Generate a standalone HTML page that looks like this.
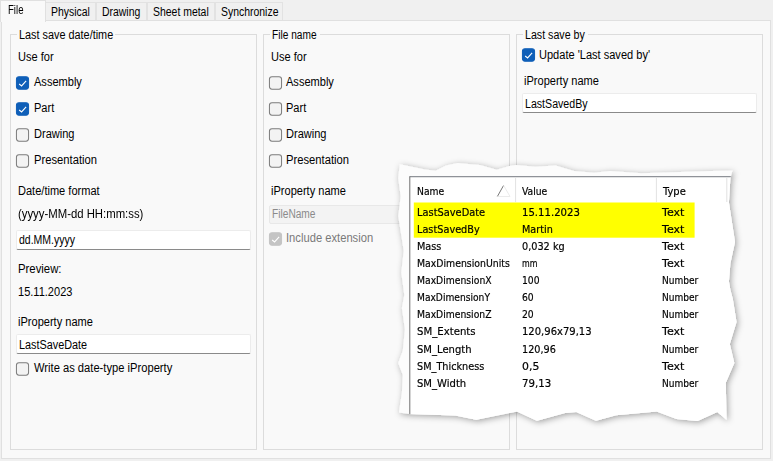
<!DOCTYPE html>
<html><head><meta charset="utf-8">
<style>
html,body{margin:0;padding:0;}
body{width:773px;height:461px;overflow:hidden;background:#f0f0f0;font-family:"Liberation Sans",sans-serif;font-size:12px;color:#000;position:relative;}
.abs{position:absolute;}
.t{position:absolute;white-space:nowrap;line-height:14px;font-size:12px;transform:translateY(var(--dy,0.2px)) scaleX(var(--sx,0.92));transform-origin:0 0;}
.tab{position:absolute;top:2px;height:18px;background:#f0f0f0;border:1px solid #e2e2e2;border-bottom:none;box-sizing:border-box;}
.tab span{position:absolute;top:2px;left:5px;white-space:nowrap;transform:translateY(-0.3px) scaleX(var(--sx,0.87));transform-origin:0 0;}
.panel{position:absolute;left:1px;top:20px;width:770px;height:439px;background:#f9f9f9;border:1px solid #e0e0e0;box-sizing:border-box;}
.grp{position:absolute;top:34px;height:416px;border:1px solid #dcdcdc;box-sizing:border-box;}
.gl{position:absolute;top:28px;white-space:nowrap;line-height:14px;transform:translateY(0.2px) scaleX(var(--sx,0.92));transform-origin:0 0;}
.gb{position:absolute;top:33px;height:3px;background:#f9f9f9;}
.cb{position:absolute;width:13px;height:13px;transform:translateY(0.45px) scale(1.01,1.035);box-sizing:border-box;border:1px solid #7c7c7c;border-radius:3px;background:#f3f3f3;}
.cb.on{background:#0f5fb8;border-color:#0f5fb8;}
.cb.dis{background:#c4c4c4;border-color:#c4c4c4;}
.cb svg{position:absolute;left:-1px;top:-1px;}
.inp{position:absolute;height:19.5px;box-sizing:border-box;background:#fff;border:1px solid #ececec;border-bottom:1px solid #8a8a8a;border-radius:2px;}
.inp.dis{background:#f3f3f3;border:1px solid #e8e8e8;}
.l{position:absolute;white-space:nowrap;font-family:"DejaVu Sans","Liberation Sans",sans-serif;font-size:11px;line-height:13px;-webkit-text-stroke:0.2px #000;transform:translateY(var(--dy,0px)) scaleX(var(--sx,0.837));transform-origin:0 0;}
</style></head><body>
<div class="panel"></div>
<div class="tab" style="left:45px;width:51px;"><span>Physical</span></div>
<div class="tab" style="left:96px;width:51px;"><span>Drawing</span></div>
<div class="tab" style="left:147px;width:68px;"><span>Sheet metal</span></div>
<div class="tab" style="left:215px;width:68px;"><span>Synchronize</span></div>
<div class="abs" style="left:0;top:0;width:46px;height:22px;background:#f9f9f9;border:1px solid #e0e0e0;border-bottom:none;box-sizing:border-box;"></div>
<div class="t" style="left:8.3px;top:3px;--sx:0.80;--dy:0px;">File</div>

<div class="grp" style="left:10px;width:247px;"></div>
<div class="grp" style="left:263px;width:247px;"></div>
<div class="grp" style="left:516px;width:247px;"></div>
<div class="gb" style="left:17px;width:98px;"></div>
<div class="gb" style="left:270px;width:49.5px;"></div>
<div class="gb" style="left:523px;width:64.5px;"></div>
<div class="gl" style="left:19px;--sx:0.905;">Last save date/time</div>
<div class="gl" style="left:272px;--sx:0.845;">File name</div>
<div class="gl" style="left:525px;--sx:0.888;">Last save by</div>

<!-- col 1 -->
<div class="t" style="left:18px;top:50px;">Use for</div>
<div class="cb on" style="left:16px;top:76px;"><svg width="13" height="13" viewBox="0 0 13 13"><path d="M3.2 7.5 L5.6 9.4 L10.1 4.5" fill="none" stroke="#fff" stroke-width="1.1"/></svg></div>
<div class="t" style="left:33.7px;top:75px;">Assembly</div>
<div class="cb on" style="left:16px;top:102px;"><svg width="13" height="13" viewBox="0 0 13 13"><path d="M3.2 7.5 L5.6 9.4 L10.1 4.5" fill="none" stroke="#fff" stroke-width="1.1"/></svg></div>
<div class="t" style="left:33.7px;top:101px;">Part</div>
<div class="cb" style="left:16px;top:128px;"></div>
<div class="t" style="left:33.7px;top:127px;">Drawing</div>
<div class="cb" style="left:16px;top:154px;"></div>
<div class="t" style="left:33.7px;top:153px;--sx:0.935;">Presentation</div>
<div class="t" style="left:18px;top:183px;--dy:0.7px;">Date/time format</div>
<div class="t" style="left:18px;top:207px;--sx:0.945;--dy:0px;">(yyyy-MM-dd HH:mm:ss)</div>
<div class="inp" style="left:16px;top:230px;width:235px;height:20px;"></div>
<div class="t" style="left:19px;top:233px;--sx:0.875;--dy:0.4px;">dd.MM.yyyy</div>
<div class="t" style="left:18px;top:262px;--sx:0.946;--dy:0.4px;">Preview:</div>
<div class="t" style="left:18px;top:285px;--sx:0.92;--dy:0.4px;">15.11.2023</div>
<div class="t" style="left:18px;top:314px;--dy:0.6px;">iProperty name</div>
<div class="inp" style="left:16px;top:334px;width:235px;height:20px;"></div>
<div class="t" style="left:19px;top:337px;--sx:0.904;--dy:0.6px;">LastSaveDate</div>
<div class="cb" style="left:16px;top:362px;"></div>
<div class="t" style="left:33.7px;top:361px;--sx:0.931;">Write as date-type iProperty</div>

<!-- col 2 -->
<div class="t" style="left:271px;top:50px;">Use for</div>
<div class="cb" style="left:269px;top:76px;"></div>
<div class="t" style="left:286.3px;top:75px;">Assembly</div>
<div class="cb" style="left:269px;top:102px;"></div>
<div class="t" style="left:286.3px;top:101px;">Part</div>
<div class="cb" style="left:269px;top:128px;"></div>
<div class="t" style="left:286.3px;top:127px;">Drawing</div>
<div class="cb" style="left:269px;top:154px;"></div>
<div class="t" style="left:286.3px;top:153px;--sx:0.935;">Presentation</div>
<div class="t" style="left:271px;top:184px;--dy:-0.2px;">iProperty name</div>
<div class="inp dis" style="left:269px;top:204.5px;width:235px;height:19px;"></div>
<div class="t" style="left:272px;top:207px;color:#8a8a8a;--sx:0.847;">FileName</div>
<div class="cb dis" style="left:269px;top:232px;"><svg width="13" height="13" viewBox="0 0 13 13"><path d="M3.2 7.5 L5.6 9.4 L10.1 4.5" fill="none" stroke="#fff" stroke-width="1.1"/></svg></div>
<div class="t" style="left:286.3px;top:231px;color:#7a7a7a;--sx:0.933;">Include extension</div>

<!-- col 3 -->
<div class="cb on" style="left:522px;top:48px;"><svg width="13" height="13" viewBox="0 0 13 13"><path d="M3.2 7.5 L5.6 9.4 L10.1 4.5" fill="none" stroke="#fff" stroke-width="1.1"/></svg></div>
<div class="t" style="left:539px;top:48px;">Update 'Last saved by'</div>
<div class="t" style="left:524px;top:73px;--dy:0.8px;">iProperty name</div>
<div class="inp" style="left:522px;top:93px;width:235px;height:20px;"></div>
<div class="t" style="left:525px;top:97px;--sx:0.885;">LastSavedBy</div>

<!-- overlay -->
<svg class="abs" style="left:380px;top:150px;" width="393" height="311" viewBox="380 150 393 311">
<defs>
<filter id="sh" x="-10%" y="-10%" width="120%" height="120%"><feDropShadow dx="1.5" dy="1.5" stdDeviation="3" flood-color="#000" flood-opacity="0.36"/></filter>
<clipPath id="cp"><path d="M399.8 164.3 L409.5 166.3 L425.0 169.5 L435.6 170.8 L446.0 165.6 L457.7 163.0 L470.7 164.3 L480.0 165.1 L496.8 169.8 L509.4 166.0 L516.0 165.1 L535.5 166.8 L555.6 165.5 L574.0 171.0 L594.0 172.7 L610.0 171.1 L641.6 173.2 L673.0 172.2 L711.0 171.1 L732.4 170.7 L730.4 178.0 L728.9 202.5 L735.0 242.0 L730.4 263.3 L728.9 281.6 L730.4 290.0 L732.8 299.0 L736.5 322.0 L729.8 344.0 L734.3 363.0 L725.8 382.7 L726.5 419.8 L717.3 412.1 L697.5 421.0 L676.6 419.1 L656.7 411.4 L616.0 415.2 L596.0 420.8 L576.3 412.1 L565.0 413.0 L536.9 420.8 L517.0 411.4 L476.2 419.8 L455.3 415.6 L409.8 414.0 L398.9 412.6 L401.9 393.0 L402.8 375.0 L398.2 363.0 L402.8 350.8 L404.9 329.5 L401.9 308.0 L404.3 295.0 L401.3 272.5 L403.7 251.0 L401.9 239.0 L398.2 216.0 L400.7 196.5 L398.2 178.0 Z"/></clipPath>
</defs>
<path d="M399.8 164.3 L409.5 166.3 L425.0 169.5 L435.6 170.8 L446.0 165.6 L457.7 163.0 L470.7 164.3 L480.0 165.1 L496.8 169.8 L509.4 166.0 L516.0 165.1 L535.5 166.8 L555.6 165.5 L574.0 171.0 L594.0 172.7 L610.0 171.1 L641.6 173.2 L673.0 172.2 L711.0 171.1 L732.4 170.7 L730.4 178.0 L728.9 202.5 L735.0 242.0 L730.4 263.3 L728.9 281.6 L730.4 290.0 L732.8 299.0 L736.5 322.0 L729.8 344.0 L734.3 363.0 L725.8 382.7 L726.5 419.8 L717.3 412.1 L697.5 421.0 L676.6 419.1 L656.7 411.4 L616.0 415.2 L596.0 420.8 L576.3 412.1 L565.0 413.0 L536.9 420.8 L517.0 411.4 L476.2 419.8 L455.3 415.6 L409.8 414.0 L398.9 412.6 L401.9 393.0 L402.8 375.0 L398.2 363.0 L402.8 350.8 L404.9 329.5 L401.9 308.0 L404.3 295.0 L401.3 272.5 L403.7 251.0 L401.9 239.0 L398.2 216.0 L400.7 196.5 L398.2 178.0 Z" fill="#fcfcfc" filter="url(#sh)"/>
<g clip-path="url(#cp)">
<rect x="410" y="177.5" width="330" height="250" fill="#fff"/>
<rect x="413.8" y="202.5" width="280.8" height="35.2" fill="#ffff00"/>
<line x1="409.5" y1="176.6" x2="740" y2="176.6" stroke="#8f9298" stroke-width="1.1"/>
<line x1="409.8" y1="176.5" x2="409.8" y2="425" stroke="#6f6f6f" stroke-width="1"/>
<line x1="515.6" y1="178" x2="515.6" y2="202" stroke="#e2e2e2" stroke-width="1"/>
<line x1="656.4" y1="178" x2="656.4" y2="202" stroke="#e2e2e2" stroke-width="1"/>
<line x1="726.8" y1="178" x2="726.8" y2="202" stroke="#e2e2e2" stroke-width="1"/>
<path d="M497.3 196.6 L503.6 185.4" stroke="#777" stroke-width="1" fill="none"/>
<path d="M503.6 185.4 L510 196.5 L497.3 196.5" stroke="#e9e9e9" stroke-width="0.9" fill="none"/>
</g>
</svg>
<div class="l" style="left:416.9px;top:184.80px;--sx:0.8370;">Name</div>
<div class="l" style="left:522.0px;top:184.80px;--sx:0.8370;">Value</div>
<div class="l" style="left:662.6px;top:184.80px;--sx:0.9000;">Type</div>
<div class="l" style="left:416.9px;top:205.80px;--sx:0.8946;">LastSaveDate</div>
<div class="l" style="left:522.0px;top:205.80px;--sx:0.9189;">15.11.2023</div>
<div class="l" style="left:662.4px;top:205.80px;--sx:1.0080;">Text</div>
<div class="l" style="left:416.9px;top:222.89px;--sx:0.8838;">LastSavedBy</div>
<div class="l" style="left:522.0px;top:222.89px;--sx:0.8793;">Martin</div>
<div class="l" style="left:662.4px;top:222.89px;--sx:1.0080;">Text</div>
<div class="l" style="left:416.9px;top:239.98px;--sx:0.8811;">Mass</div>
<div class="l" style="left:522.0px;top:239.98px;--sx:0.8829;">0,032 kg</div>
<div class="l" style="left:662.4px;top:239.98px;--sx:1.0080;">Text</div>
<div class="l" style="left:416.9px;top:257.07px;--sx:0.8487;">MaxDimensionUnits</div>
<div class="l" style="left:522.0px;top:257.07px;--sx:0.7200;">mm</div>
<div class="l" style="left:662.4px;top:257.07px;--sx:1.0080;">Text</div>
<div class="l" style="left:416.9px;top:274.16px;--sx:0.8406;">MaxDimensionX</div>
<div class="l" style="left:522.0px;top:274.16px;--sx:0.8370;">100</div>
<div class="l" style="left:662.4px;top:274.16px;--sx:0.8208;">Number</div>
<div class="l" style="left:416.9px;top:291.25px;--sx:0.8298;">MaxDimensionY</div>
<div class="l" style="left:522.0px;top:291.25px;--sx:0.8370;">60</div>
<div class="l" style="left:662.4px;top:291.25px;--sx:0.8208;">Number</div>
<div class="l" style="left:416.9px;top:308.34px;--sx:0.8397;">MaxDimensionZ</div>
<div class="l" style="left:522.0px;top:308.34px;--sx:0.8370;">20</div>
<div class="l" style="left:662.4px;top:308.34px;--sx:0.8208;">Number</div>
<div class="l" style="left:416.9px;top:325.43px;--sx:0.9225;">SM_Extents</div>
<div class="l" style="left:522.0px;top:325.43px;--sx:0.9099;">120,96x79,13</div>
<div class="l" style="left:662.4px;top:325.43px;--sx:1.0080;">Text</div>
<div class="l" style="left:416.9px;top:342.52px;--sx:0.9108;">SM_Length</div>
<div class="l" style="left:522.0px;top:342.52px;--sx:0.8802;">120,96</div>
<div class="l" style="left:662.4px;top:342.52px;--sx:0.8208;">Number</div>
<div class="l" style="left:416.9px;top:359.61px;--sx:0.8820;">SM_Thickness</div>
<div class="l" style="left:522.0px;top:359.61px;--sx:0.9900;">0,5</div>
<div class="l" style="left:662.4px;top:359.61px;--sx:1.0080;">Text</div>
<div class="l" style="left:416.9px;top:376.70px;--sx:0.9117;">SM_Width</div>
<div class="l" style="left:522.0px;top:376.70px;--sx:0.9279;">79,13</div>
<div class="l" style="left:662.4px;top:376.70px;--sx:0.8208;">Number</div>
</body></html>
